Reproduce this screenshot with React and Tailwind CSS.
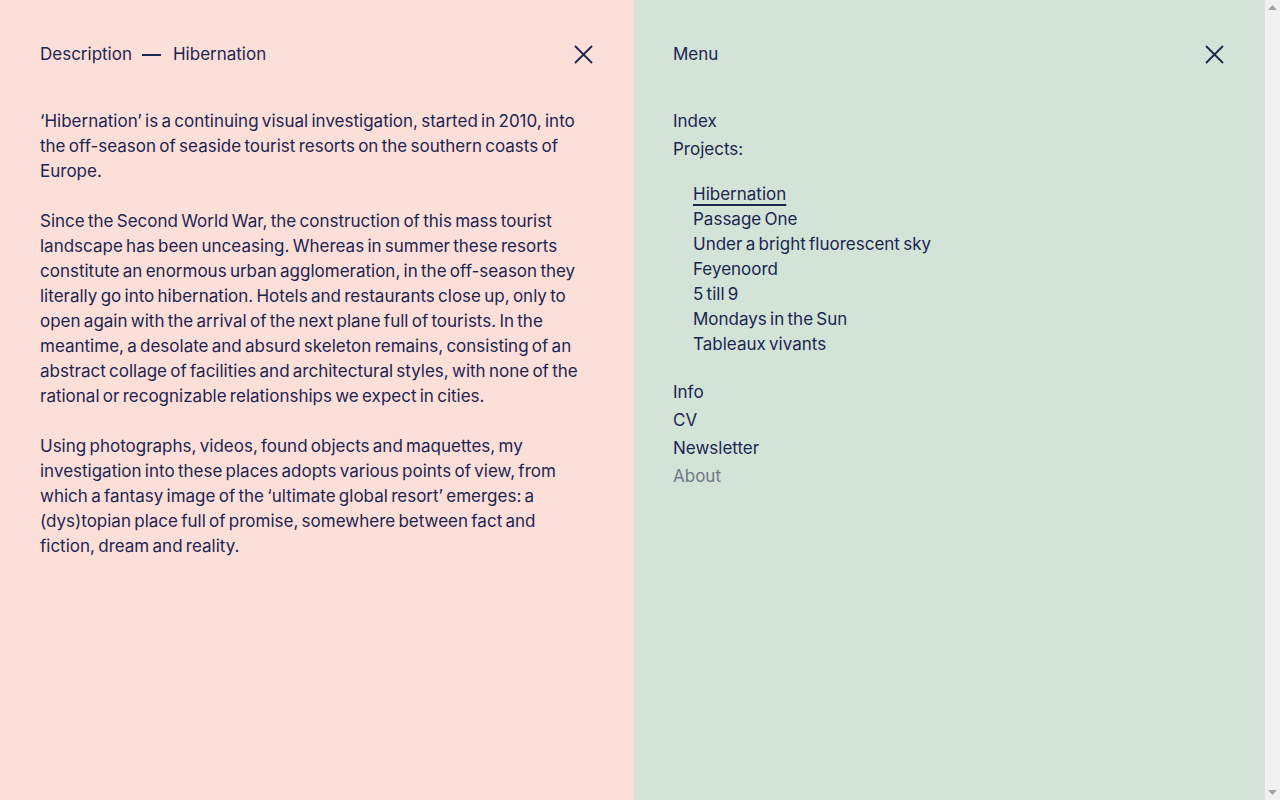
const ink = "text-[#1c2550]";

const projects = [
  "Hibernation",
  "Passage One",
  "Under a bright fluorescent sky",
  "Feyenoord",
  "5 till 9",
  "Mondays in the Sun",
  "Tableaux vivants",
];

function CloseIcon() {
  return (
    <svg width="19" height="19" viewBox="0 0 19 19" className="block">
      <path d="M1 1 L18 18 M18 1 L1 18" stroke="#1c2550" strokeWidth="1.8" fill="none" />
    </svg>
  );
}

function Scrollbar() {
  return (
    <div className="w-[15px] shrink-0 bg-[#f1f1f1] flex flex-col justify-between items-center py-[5px]">
      <svg width="9" height="5" viewBox="0 0 9 5">
        <path d="M0 5 L4.5 0 L9 5 Z" fill="#a3a3a3" />
      </svg>
      <svg width="9" height="5" viewBox="0 0 9 5">
        <path d="M0 0 L9 0 L4.5 5 Z" fill="#a3a3a3" />
      </svg>
    </div>
  );
}

export default function App() {
  return (
    <div
      className={`h-screen flex ${ink} text-[17px] leading-[25px] [word-spacing:-1.5px]`}
      style={{ fontFamily: "Inter, 'Liberation Sans', sans-serif" }}
    >
      {/* Description panel */}
      <section className="w-[634px] shrink-0 bg-[#fddfda] pl-[40px] pr-[41px] pt-[42px]">
        <header className="flex items-center justify-between">
          <div className="flex items-center">
            <span>Description</span>
            <span className="ml-[10px] mr-[12px] w-[19px] h-[2px] bg-[#1c2550]" />
            <span>Hibernation</span>
          </div>
          <CloseIcon />
        </header>

        <div className="mt-[42px] space-y-[25px] pr-[6px]">
          <p>
            ‘Hibernation’ is a continuing visual investigation, started in 2010, into the off-season of
            seaside tourist resorts on the southern coasts of Europe.
          </p>
          <p>
            Since the Second World War, the construction of this mass tourist landscape has been
            unceasing. Whereas in summer these resorts constitute an enormous urban agglomeration, in
            the off-season they literally go into hibernation. Hotels and restaurants close up, only to
            open again with the arrival of the next plane full of tourists. In the meantime, a desolate
            and absurd skeleton remains, consisting of an abstract collage of facilities and
            architectural styles, with none of the rational or recognizable relationships we expect in
            cities.
          </p>
          <p>
            Using photographs, videos, found objects and maquettes, my investigation into these places
            adopts various points of view, from which a fantasy image of the ‘ultimate global resort’
            emerges: a (dys)topian place full of promise, somewhere between fact and fiction, dream and
            reality.
          </p>
        </div>
      </section>

      {/* Menu panel */}
      <nav className="flex-1 bg-[#d3e3d8] pl-[39px] pr-[41px] pt-[42px]">
        <header className="flex items-center justify-between">
          <span>Menu</span>
          <CloseIcon />
        </header>

        <ul className="mt-[40px] leading-[28px]">
          <li>Index</li>
          <li>Projects:</li>
        </ul>
        <ul className="mt-[19px] mb-[21px] pl-[20px]">
          {projects.map((p, i) => (
            <li key={p}>
              {i === 0 ? (
                <span className="underline decoration-[1.5px] underline-offset-[4px]">{p}</span>
              ) : (
                p
              )}
            </li>
          ))}
        </ul>
        <ul className="leading-[28px]">
          <li>Info</li>
          <li>CV</li>
          <li>Newsletter</li>
          <li className="text-[#6d7886]">About</li>
        </ul>
      </nav>

      <Scrollbar />
    </div>
  );
}
